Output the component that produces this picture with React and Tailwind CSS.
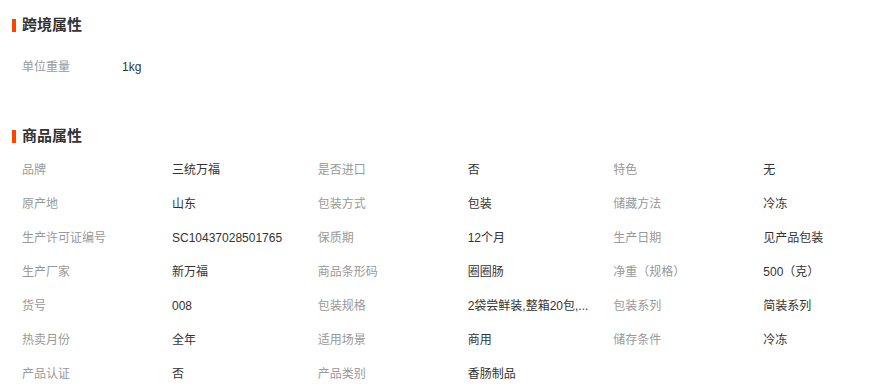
const crossBorder = [{ label: '单位重量', value: '1kg' }];

const attrs = [
  ['品牌', '三统万福'],
  ['是否进口', '否'],
  ['特色', '无'],
  ['原产地', '山东'],
  ['包装方式', '包装'],
  ['储藏方法', '冷冻'],
  ['生产许可证编号', 'SC10437028501765'],
  ['保质期', '12个月'],
  ['生产日期', '见产品包装'],
  ['生产厂家', '新万福'],
  ['商品条形码', '圈圈肠'],
  ['净重（规格）', '500（克）'],
  ['货号', '008'],
  ['包装规格', '2袋尝鲜装,整箱20包,...'],
  ['包装系列', '简装系列'],
  ['热卖月份', '全年'],
  ['适用场景', '商用'],
  ['储存条件', '冷冻'],
  ['产品认证', '否'],
  ['产品类别', '香肠制品'],
];

function Title({ children, className }) {
  return (
    <h3 className={`flex items-center h-5 ${className}`}>
      <span className="w-1 h-[13px] bg-[#ff4400] ml-[12px]"></span>
      <span className="ml-[6px] text-[15px] font-bold text-[#333] leading-5">{children}</span>
    </h3>
  );
}

export default function App() {
  return (
    <div
      className="w-[887px] h-[392px] bg-white overflow-hidden text-[12px]"
      style={{ fontFamily: '"Liberation Sans", "Noto Sans CJK SC", sans-serif' }}
    >
      <Title className="mt-[15px]">跨境属性</Title>
      <ul className="mt-[15px]">
        {crossBorder.map((item) => (
          <li key={item.label} className="flex h-[34px] items-center pl-[22px]">
            <span className="w-[100px] text-[#999]">{item.label}</span>
            <span className="text-[#333]">{item.value}</span>
          </li>
        ))}
      </ul>

      <Title className="mt-[42px]">商品属性</Title>
      <ul className="mt-[7px] flex flex-wrap">
        {attrs.map(([label, value]) => (
          <li key={label} className="w-1/3 flex h-[34px] items-center pl-[22px]">
            <span className="w-[150px] shrink-0 text-[#999]">{label}</span>
            <span className="flex-1 min-w-0 truncate text-[#333]">{value}</span>
          </li>
        ))}
      </ul>
    </div>
  );
}
